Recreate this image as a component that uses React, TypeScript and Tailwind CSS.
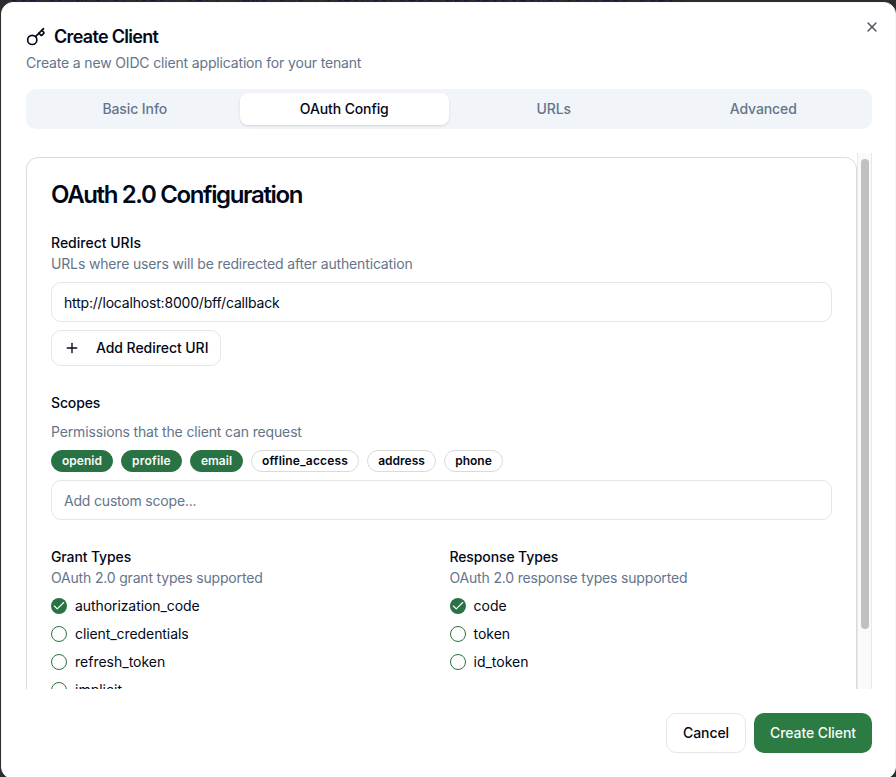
import { Check, Plus, X } from 'lucide-react';

function KeyIcon() {
  return (
    <svg className="h-5 w-5 shrink-0" viewBox="0 0 24 24" fill="none" stroke="currentColor" strokeWidth="2" strokeLinecap="round" strokeLinejoin="round">
      <path d="m15.5 7.5 2.3 2.3a1 1 0 0 0 1.4 0l2.1-2.1a1 1 0 0 0 0-1.4L19 4" />
      <path d="m21 2-9.6 9.6" />
      <circle cx="7.5" cy="15.5" r="5.5" />
    </svg>
  );
}

const tabs = ['Basic Info', 'OAuth Config', 'URLs', 'Advanced'];

const scopes = [
  { name: 'openid', on: true, size: 'w-[62px]' },
  { name: 'profile', on: true, size: 'w-[61px] tracking-[0.2px]' },
  { name: 'email', on: true, size: 'w-[53px]' },
  { name: 'offline_access', on: false, size: 'w-[108px] tracking-[0.17px]' },
  { name: 'address', on: false, size: 'w-[69px]' },
  { name: 'phone', on: false, size: 'w-[59px]' },
];

function Option({ label, checked }: { label: string; checked?: boolean }) {
  return (
    <div className="flex h-5 items-center gap-2">
      <span
        className={
          checked
            ? 'flex h-4 w-4 shrink-0 items-center justify-center rounded-full bg-[#297243] text-white'
            : 'h-4 w-4 shrink-0 rounded-full border border-[#297243]'
        }
      >
        {checked && <Check className="h-3.5 w-3.5" strokeWidth={2} />}
      </span>
      <span className={label.length > 14 ? 'text-sm tracking-[-0.08px]' : 'text-sm'}>{label}</span>
    </div>
  );
}

function OptionGroup({ title, hint, items, selected }: { title: string; hint: string; items: string[]; selected: string }) {
  return (
    <div>
      <div className="text-sm leading-[22px] font-medium tracking-[-0.12px]">{title}</div>
      <div className="text-sm tracking-[-0.18px] text-[#64748b]">{hint}</div>
      <div className="mt-2 flex flex-col gap-2">
        {items.map((item) => (
          <Option key={item} label={item} checked={item === selected} />
        ))}
      </div>
    </div>
  );
}

export default function App() {
  return (
    <div className="relative h-[777px] w-[896px] overflow-hidden bg-[#2d2d2f] pt-[2px] pl-px font-['Inter',sans-serif] text-[#020817]">
      <div className="absolute top-[-11px] left-[10px] font-['Liberation_Mono',monospace] text-[14px] leading-[16px] tracking-[0.84px] whitespace-pre text-[#17173a]">
        001/tenant/5745157-6277-4aab-8767/clients/oidc/applications/configuration
      </div>
      <div className="relative flex h-[777px] w-[895px] flex-col rounded-xl border border-[#f6f6f4] bg-white p-6 pr-[23px]">
        <X className="absolute top-4 right-[15px] h-4 w-4 text-[#4d515c]" strokeWidth={2} />
        <header className="flex flex-col gap-1.5">
          <h2 className="flex items-center gap-2 text-lg leading-5 font-semibold tracking-[-0.69px]">
            <KeyIcon />
            Create Client
          </h2>
          <p className="text-sm tracking-[-0.16px] text-[#64748b]">Create a new OIDC client application for your tenant</p>
        </header>

        <nav className="mt-4 grid h-10 shrink-0 grid-cols-4 rounded-[10px] bg-[#f1f5f9] p-1">
          {tabs.map((tab) => (
            <div
              key={tab}
              className={
                tab === 'OAuth Config'
                  ? 'flex items-center justify-center rounded-lg bg-white text-sm font-medium tracking-[-0.12px] shadow-sm'
                  : 'flex items-center justify-center text-sm font-medium tracking-[-0.1px] text-[#64748b]'
              }
            >
              {tab}
            </div>
          ))}
        </nav>

        <div className="mt-6 flex h-[536px] shrink-0 overflow-hidden">
          <div className="w-[831px] shrink-0 pt-1">
            <section className="h-[760px] rounded-xl border border-[#d9dbdb] px-6 pt-6">
              <h3 className="text-2xl leading-[26px] font-semibold tracking-[-1.36px]">OAuth 2.0 Configuration</h3>

              <div className="mt-6">
                <div className="text-sm leading-[22px] font-medium">Redirect URIs</div>
                <div className="text-sm tracking-[-0.155px] text-[#64748b]">URLs where users will be redirected after authentication</div>
                <div className="mt-2 flex h-10 items-center rounded-[10px] border border-[#e5e7e7] px-3 pt-0.5 text-sm tracking-[-0.19px]">
                  http://localhost:8000/bff/callback
                </div>
                <div className="mt-2 flex h-9 w-[170px] items-center rounded-[10px] border border-[#e5e7e7] pl-3 text-sm font-medium tracking-[-0.06px]">
                  <Plus className="mr-4 h-4 w-4" strokeWidth={2} />
                  Add Redirect URI
                </div>
              </div>

              <div className="mt-[26px]">
                <div className="text-sm leading-[22px] font-medium tracking-[-0.15px]">Scopes</div>
                <div className="mt-2 text-sm tracking-[-0.15px] text-[#64748b]">Permissions that the client can request</div>
                <div className="mt-2 flex gap-2">
                  {scopes.map((scope) => (
                    <span key={scope.name} className={scope.size}>
                      <span
                        className={
                          scope.on
                            ? 'flex h-[22px] items-center justify-center rounded-full border border-[#297243] bg-[#297243] text-xs font-semibold text-[#f8fafc]'
                            : 'flex h-[22px] items-center justify-center rounded-full border border-[#d9dbdb] text-xs font-semibold'
                        }
                      >
                        {scope.name}
                      </span>
                    </span>
                  ))}
                </div>
                <div className="mt-2 flex h-10 items-center rounded-[10px] border border-[#e5e7e7] px-3 pt-0.5 text-sm tracking-[-0.19px] text-[#64748b]">
                  Add custom scope...
                </div>
              </div>

              <div className="mt-[26px] grid grid-cols-2 gap-4">
                <OptionGroup
                  title="Grant Types"
                  hint="OAuth 2.0 grant types supported"
                  items={['authorization_code', 'client_credentials', 'refresh_token', 'implicit']}
                  selected="authorization_code"
                />
                <OptionGroup
                  title="Response Types"
                  hint="OAuth 2.0 response types supported"
                  items={['code', 'token', 'id_token']}
                  selected="code"
                />
              </div>
            </section>
          </div>
          <div className="flex w-[15px] justify-center border-x border-[#e8e8e8] bg-[#fafafa] pt-1.5">
            <div className="h-[470px] w-2 rounded-full bg-[#c1c1c1]" />
          </div>
        </div>

        <footer className="mt-6 flex shrink-0 justify-end gap-2 text-sm font-medium tracking-[-0.08px]">
          <div className="flex h-10 w-20 items-center justify-center rounded-[10px] border border-[#e5e7e7]">Cancel</div>
          <div className="flex h-10 w-[118px] items-center justify-center rounded-[10px] bg-[#2b7b43] text-[#f8fafc]">Create Client</div>
        </footer>
      </div>
    </div>
  );
}
